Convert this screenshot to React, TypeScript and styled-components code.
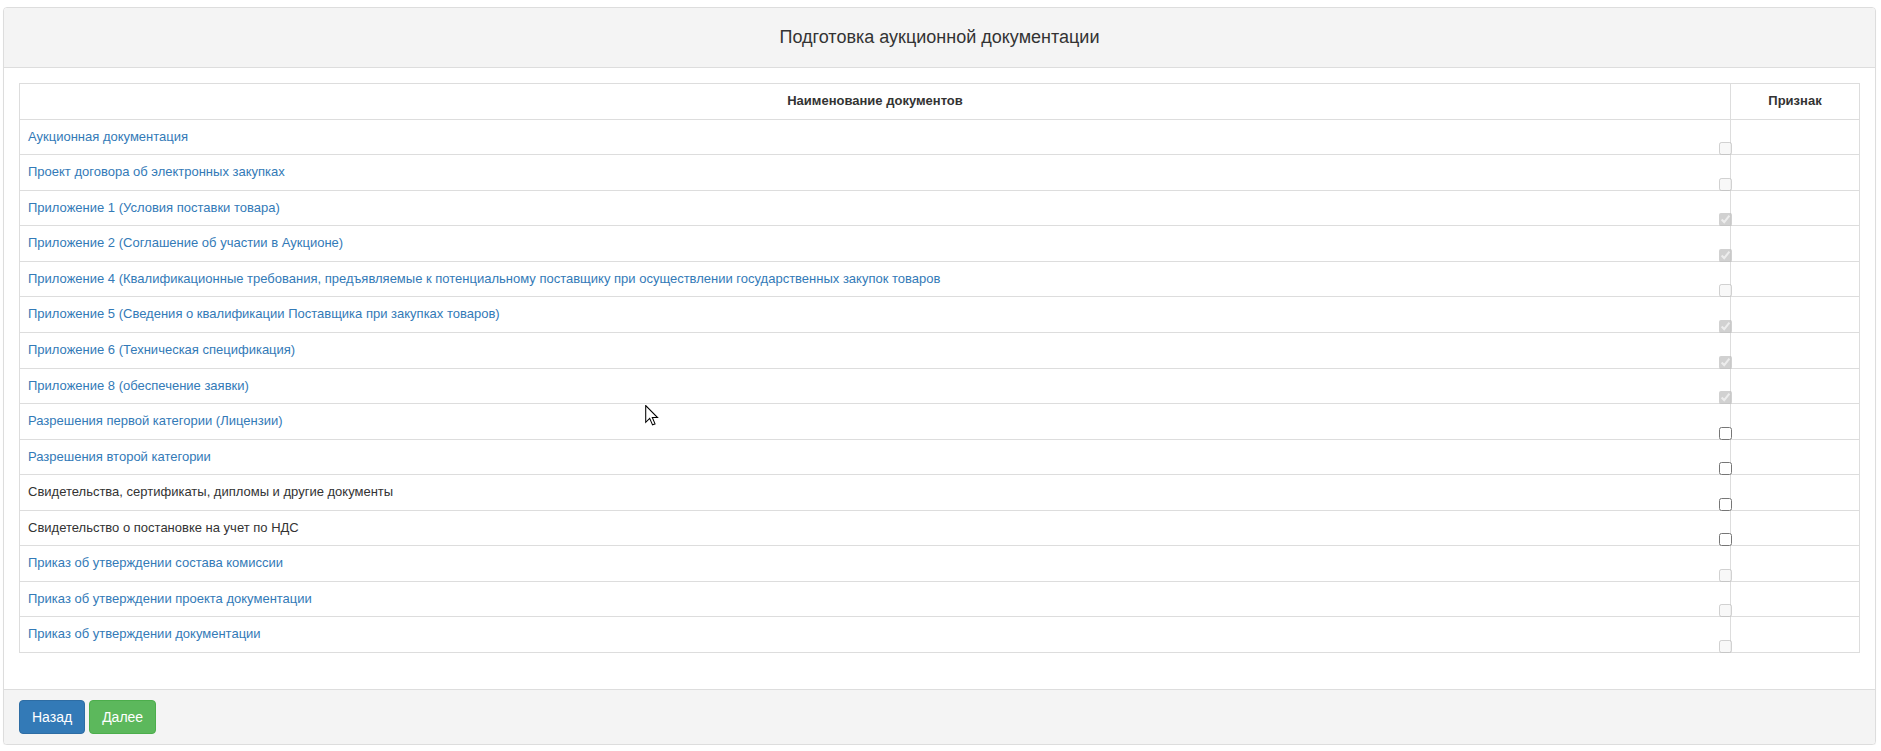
import React from "react";
import styled, { createGlobalStyle } from "styled-components";

const GlobalStyle = createGlobalStyle`
  *, *::before, *::after { box-sizing: border-box; }
  html, body { margin: 0; padding: 0; background: #fff; }
  body {
    font-family: "Liberation Sans", Arial, Helvetica, sans-serif;
    font-size: 13px;
    line-height: 1.42857143;
    color: #333;
  }
`;

const Page = styled.div`
  position: relative;
  padding: 7px 5px 0 3px;
`;

const Panel = styled.div`
  border: 1px solid #ddd;
  border-radius: 4px;
  background: #fff;
  box-shadow: 0 1px 1px rgba(0, 0, 0, 0.05);
`;

const PanelHeading = styled.div`
  background: #f4f4f4;
  border-bottom: 1px solid #ddd;
  border-radius: 3px 3px 0 0;
  padding: 19px 15px 19px;
  text-align: center;
  font-size: 18px;
  line-height: 21px;
  color: #333;
`;

const PanelBody = styled.div`
  padding: 15px;
`;

const Table = styled.table`
  width: 100%;
  border-collapse: collapse;
  border-spacing: 0;
  border: 1px solid #ddd;
  margin-bottom: 21px;
`;

const Th = styled.th<{ $w?: number }>`
  border: 1px solid #ddd;
  padding: 8px;
  font-weight: bold;
  text-align: center;
  vertical-align: bottom;
  color: #333;
  ${(p) => (p.$w ? `width: ${p.$w}px;` : "")}
`;

const Td = styled.td`
  border: 1px solid #ddd;
  padding: 8px;
  vertical-align: top;
`;

const NameCell = styled.div`
  display: flex;
  align-items: flex-end;
  justify-content: space-between;
`;

const DocLink = styled.a<{ $plain?: boolean }>`
  color: ${(p) => (p.$plain ? "#333" : "#337ab7")};
  text-decoration: none;
  white-space: nowrap;
`;

const Check = styled.input`
  width: 13px;
  height: 13px;
  margin: 0 -10px -9px 0;
  flex: none;
`;

const PanelFooter = styled.div`
  background: #f4f4f4;
  border-top: 1px solid #ddd;
  border-radius: 0 0 3px 3px;
  padding: 10px 15px;
  display: flex;
  gap: 4px;
`;

const Button = styled.button<{ $variant: "primary" | "success" }>`
  font-family: "Liberation Sans", Arial, Helvetica, sans-serif;
  font-size: 14px;
  line-height: 20px;
  padding: 6px 12px;
  border-radius: 4px;
  color: #fff;
  cursor: pointer;
  background: ${(p) => (p.$variant === "primary" ? "#337ab7" : "#5cb85c")};
  border: 1px solid ${(p) => (p.$variant === "primary" ? "#2e6da4" : "#4cae4c")};
`;

const Cursor = styled.svg`
  position: absolute;
  left: 645px;
  top: 405px;
  pointer-events: none;
`;

type Doc = { name: string; checked: boolean; disabled: boolean; plain?: boolean };

const docs: Doc[] = [
  { name: "Аукционная документация", checked: false, disabled: true },
  { name: "Проект договора об электронных закупках", checked: false, disabled: true },
  { name: "Приложение 1 (Условия поставки товара)", checked: true, disabled: true },
  { name: "Приложение 2 (Соглашение об участии в Аукционе)", checked: true, disabled: true },
  {
    name:
      "Приложение 4 (Квалификационные требования, предъявляемые к потенциальному поставщику при осуществлении государственных закупок товаров",
    checked: false,
    disabled: true,
  },
  { name: "Приложение 5 (Сведения о квалификации Поставщика при закупках товаров)", checked: true, disabled: true },
  { name: "Приложение 6 (Техническая спецификация)", checked: true, disabled: true },
  { name: "Приложение 8 (обеспечение заявки)", checked: true, disabled: true },
  { name: "Разрешения первой категории (Лицензии)", checked: false, disabled: false },
  { name: "Разрешения второй категории", checked: false, disabled: false },
  { name: "Свидетельства, сертификаты, дипломы и другие документы", checked: false, disabled: false, plain: true },
  { name: "Свидетельство о постановке на учет по НДС", checked: false, disabled: false, plain: true },
  { name: "Приказ об утверждении состава комиссии", checked: false, disabled: true },
  { name: "Приказ об утверждении проекта документации", checked: false, disabled: true },
  { name: "Приказ об утверждении документации", checked: false, disabled: true },
];

export default function App() {
  return (
    <Page>
      <GlobalStyle />
      <Panel>
        <PanelHeading>Подготовка аукционной документации</PanelHeading>
        <PanelBody>
          <Table>
            <thead>
              <tr>
                <Th>Наименование документов</Th>
                <Th $w={129}>Признак</Th>
              </tr>
            </thead>
            <tbody>
              {docs.map((d) => (
                <tr key={d.name}>
                  <Td>
                    <NameCell>
                      <DocLink href="#" $plain={d.plain} onClick={(e) => e.preventDefault()}>
                        {d.name}
                      </DocLink>
                      <Check type="checkbox" defaultChecked={d.checked} disabled={d.disabled} />
                    </NameCell>
                  </Td>
                  <Td />
                </tr>
              ))}
            </tbody>
          </Table>
        </PanelBody>
        <PanelFooter>
          <Button $variant="primary">Назад</Button>
          <Button $variant="success">Далее</Button>
        </PanelFooter>
      </Panel>
      <Cursor width="14" height="22" viewBox="0 0 13 21">
        <path
          d="M0.5 0.5 L0.5 16.5 L4.3 12.8 L7 19 L9.4 18 L6.8 12 L11.8 12 Z"
          fill="#fff"
          stroke="#000"
          strokeWidth="1"
          strokeLinejoin="miter"
        />
      </Cursor>
    </Page>
  );
}
